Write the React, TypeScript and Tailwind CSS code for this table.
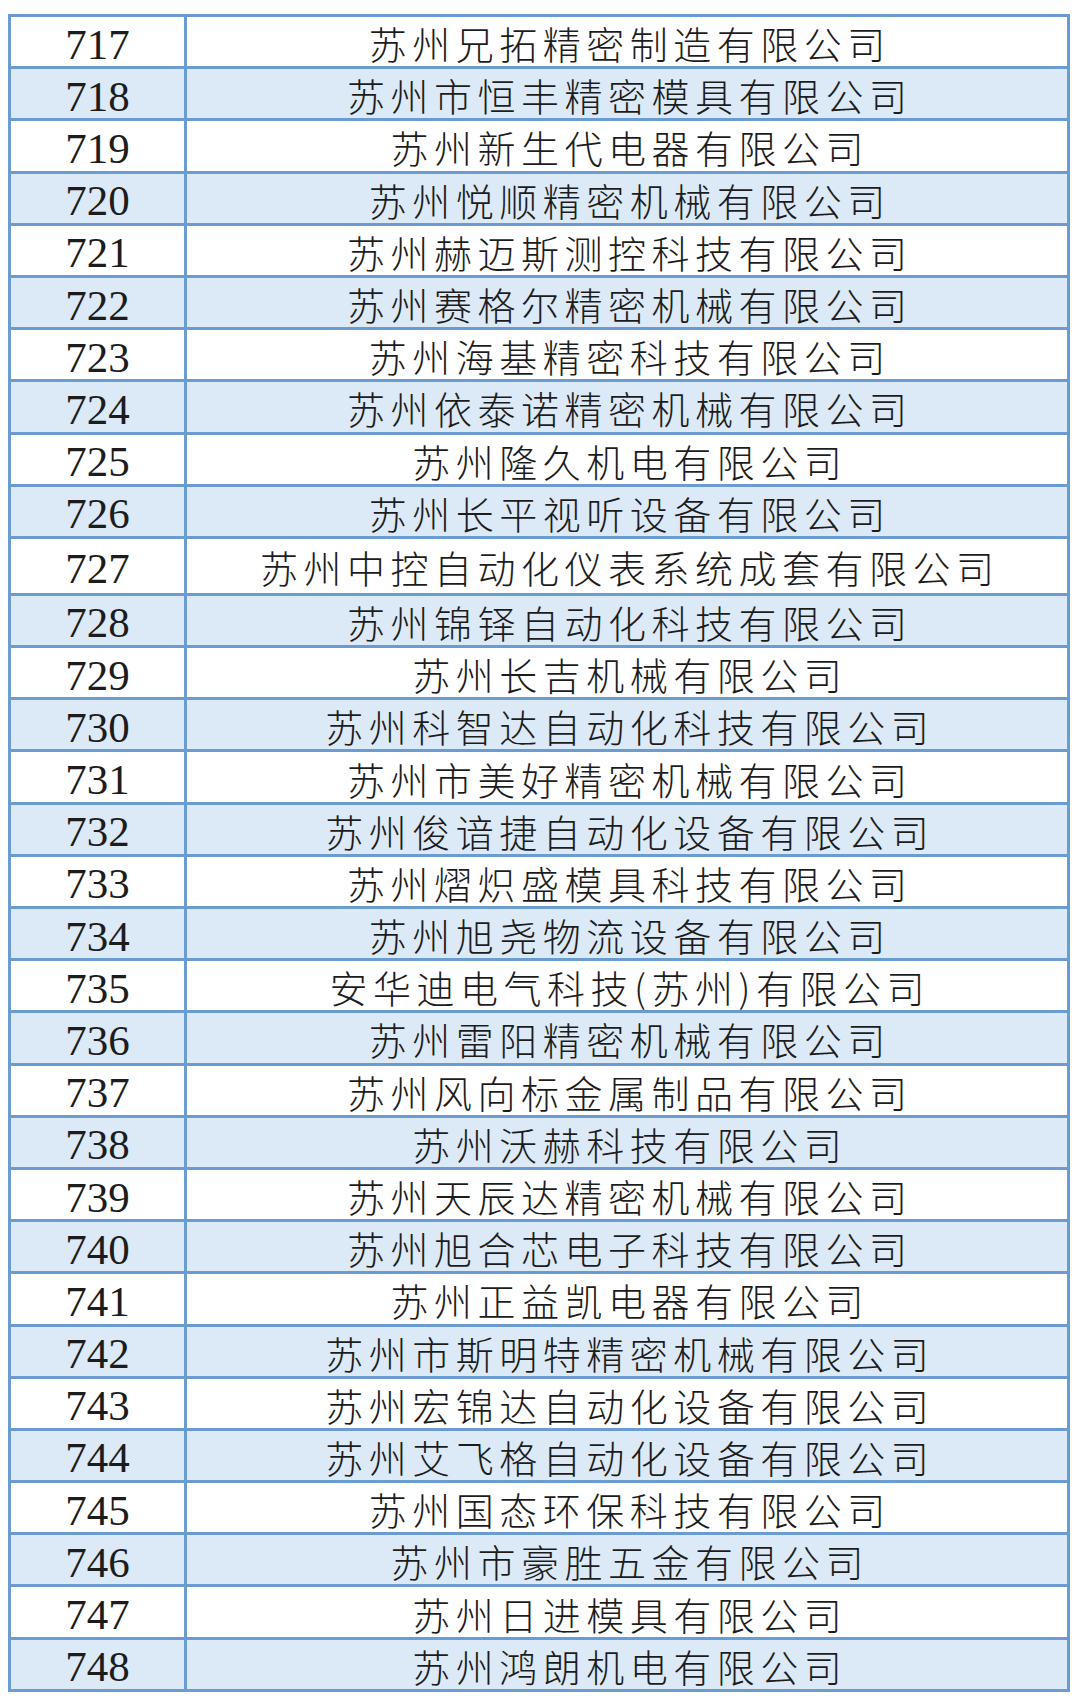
import React from "react";

const companies = [
  "苏州兄拓精密制造有限公司",
  "苏州市恒丰精密模具有限公司",
  "苏州新生代电器有限公司",
  "苏州悦顺精密机械有限公司",
  "苏州赫迈斯测控科技有限公司",
  "苏州赛格尔精密机械有限公司",
  "苏州海基精密科技有限公司",
  "苏州依泰诺精密机械有限公司",
  "苏州隆久机电有限公司",
  "苏州长平视听设备有限公司",
  "苏州中控自动化仪表系统成套有限公司",
  "苏州锦铎自动化科技有限公司",
  "苏州长吉机械有限公司",
  "苏州科智达自动化科技有限公司",
  "苏州市美好精密机械有限公司",
  "苏州俊谙捷自动化设备有限公司",
  "苏州熠炽盛模具科技有限公司",
  "苏州旭尧物流设备有限公司",
  "安华迪电气科技(苏州)有限公司",
  "苏州雷阳精密机械有限公司",
  "苏州风向标金属制品有限公司",
  "苏州沃赫科技有限公司",
  "苏州天辰达精密机械有限公司",
  "苏州旭合芯电子科技有限公司",
  "苏州正益凯电器有限公司",
  "苏州市斯明特精密机械有限公司",
  "苏州宏锦达自动化设备有限公司",
  "苏州艾飞格自动化设备有限公司",
  "苏州国态环保科技有限公司",
  "苏州市豪胜五金有限公司",
  "苏州日进模具有限公司",
  "苏州鸿朗机电有限公司",
];

export default function App() {
  return (
    <div className="w-[1080px] h-[1708px] bg-white pt-[14px] pl-[8px]">
      <div className="w-[1062px] border-[3px] border-[#6a9bd1] text-[#1c1c1c]">
        {companies.map((name, i) => {
          const last = i === companies.length - 1;
          const tall = i === 10;
          return (
            <div
              key={i}
              className={
                "flex box-border " +
                (i % 2 === 1 ? "bg-[#dce9f6] " : "bg-white ") +
                (last ? "h-[49.2px] " : "border-b-[3px] border-[#6a9bd1] ") +
                (tall ? "h-[57px]" : last ? "" : "h-[52.2px]")
              }
            >
              <div className="w-[176px] shrink-0 border-r-[3px] border-[#6a9bd1] flex items-center justify-center pt-[5px]">
                <span className="text-[43px] leading-none" style={{ fontFamily: '"Liberation Serif", serif' }}>
                  {717 + i}
                </span>
              </div>
              <div className="flex-1 flex items-center justify-center pt-[3px]">
                <span
                  className="text-[38px] leading-none font-light tracking-[5.5px] pl-[5.5px]"
                  style={{ fontFamily: '"Noto Sans CJK SC", sans-serif' }}
                >
                  {name}
                </span>
              </div>
            </div>
          );
        })}
      </div>
    </div>
  );
}
